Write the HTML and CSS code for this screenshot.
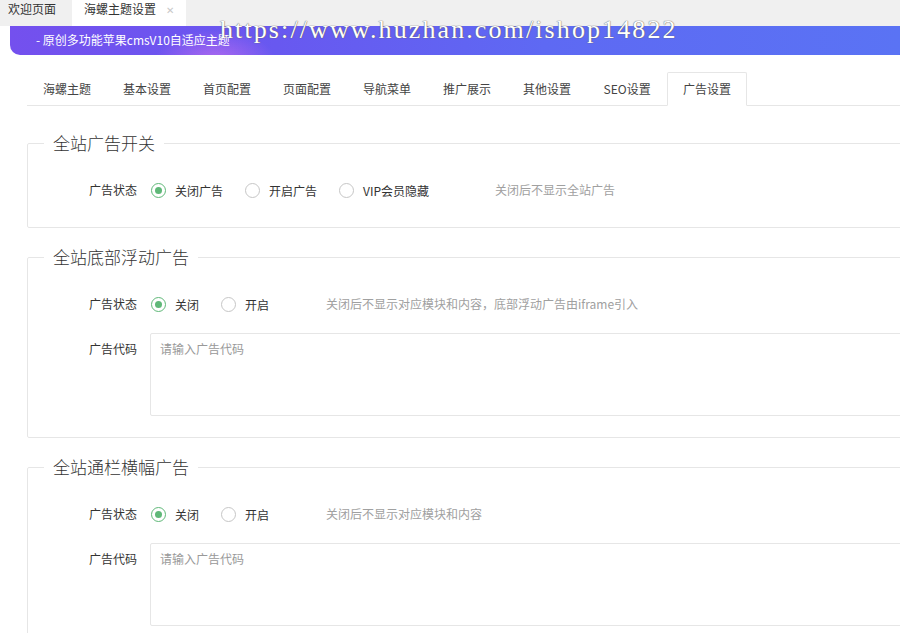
FILE: index.html
```html
<!DOCTYPE html>
<html lang="zh-CN">
<head>
  <meta charset="UTF-8">
  <meta name="viewport" content="width=device-width, initial-scale=1.0">
  <title>海螺主题设置</title>
  <link rel="stylesheet" href="styles.css">
</head>
<body>

  <!-- 顶部标签页 -->
  <div class="page-tabs">
    <div class="page-tab">欢迎页面</div>
    <div class="page-tab active">海螺主题设置<span class="tab-close">✕</span></div>
  </div>

  <div class="watermark">https://www.huzhan.com/ishop14822</div>

  <div class="banner">- 原创多功能苹果cmsV10自适应主题</div>

  <div class="main">
    <ul class="tab-title">
      <li>海螺主题</li>
      <li>基本设置</li>
      <li>首页配置</li>
      <li>页面配置</li>
      <li>导航菜单</li>
      <li>推广展示</li>
      <li>其他设置</li>
      <li>SEO设置</li>
      <li class="this">广告设置</li>
    </ul>

    <!-- 全站广告开关 -->
    <fieldset class="field">
      <legend>全站广告开关</legend>
      <div class="form-item">
        <label class="form-label">广告状态</label>
        <div class="radio checked"><i></i>关闭广告</div>
        <div class="radio"><i></i>开启广告</div>
        <div class="radio"><i></i>VIP会员隐藏</div>
        <div class="word-aux wide">关闭后不显示全站广告</div>
      </div>
    </fieldset>

    <!-- 全站底部浮动广告 -->
    <fieldset class="field">
      <legend>全站底部浮动广告</legend>
      <div class="form-item">
        <label class="form-label">广告状态</label>
        <div class="radio checked"><i></i>关闭</div>
        <div class="radio"><i></i>开启</div>
        <div class="word-aux">关闭后不显示对应模块和内容，底部浮动广告由iframe引入</div>
      </div>
      <div class="form-item">
        <label class="form-label">广告代码</label>
        <textarea class="textarea" placeholder="请输入广告代码"></textarea>
      </div>
    </fieldset>

    <!-- 全站通栏横幅广告 -->
    <fieldset class="field">
      <legend>全站通栏横幅广告</legend>
      <div class="form-item">
        <label class="form-label">广告状态</label>
        <div class="radio checked"><i></i>关闭</div>
        <div class="radio"><i></i>开启</div>
        <div class="word-aux">关闭后不显示对应模块和内容</div>
      </div>
      <div class="form-item">
        <label class="form-label">广告代码</label>
        <textarea class="textarea" placeholder="请输入广告代码"></textarea>
      </div>
    </fieldset>
  </div>

</body>
</html>
```

FILE: styles.css
```css
html, body {
  overflow: hidden;
}

body {
  margin: 0;
  padding: 0;
  background-color: #FFF;
  font-family: "Noto Sans CJK SC", "Liberation Sans", sans-serif;
  font-size: 12px;
  color: #333;
  position: relative;
}

.page-tabs {
  display: flex;
  height: 26px;
  background-color: #F0F0F0;
}

.page-tab {
  padding: 0 16px 0 8px;
  line-height: 18px;
  color: #333;
}

.page-tab.active {
  background-color: #FFF;
  padding: 0 12px;
}

.tab-close {
  margin-left: 10px;
  font-size: 10px;
  color: #C8C8C8;
}

.watermark {
  position: absolute;
  left: 220px;
  top: 15px;
  font-family: "Liberation Serif", serif;
  font-size: 26px;
  line-height: 30px;
  letter-spacing: 2.1px;
  color: #FFF;
  text-shadow: 0 0 1px #666, 0 0 1px #666;
  white-space: nowrap;
  z-index: 5;
}

.banner {
  margin-left: 10px;
  height: 29px;
  line-height: 28px;
  padding-left: 26px;
  border-radius: 0 0 0 10px;
  color: #FFF;
  background:
    radial-gradient(circle at 935px 45px, #4F6BF6 0, #4F6BF6 48px, rgba(79, 107, 246, 0) 49px),
    radial-gradient(ellipse 60px 30px at 205px 34px, rgba(226, 120, 240, 0.55), rgba(226, 120, 240, 0)),
    linear-gradient(90deg, #7450EE 0%, #6858F0 30%, #5E69F3 60%, #5A73F4 100%);
}

.main {
  width: 1000px;
  padding-left: 27px;
}

.tab-title {
  display: flex;
  list-style: none;
  margin: 17px 0 0;
  padding: 0;
  height: 33px;
  border-bottom: 1px solid #E6E6E6;
}

.tab-title li {
  box-sizing: border-box;
  min-width: 80px;
  height: 34px;
  line-height: 31px;
  padding: 0 15px;
  text-align: center;
  border: 1px solid transparent;
  color: #444;
}

.tab-title li.this {
  background-color: #FFF;
  border-color: #E6E6E6;
  border-bottom-color: #FFF;
  border-radius: 2px 2px 0 0;
}

.field {
  margin: 25px 0 0;
  padding: 19px 0 21px;
  border: 1px solid #E6E6E6;
  border-radius: 2px;
}

.field + .field {
  margin-top: 17px;
}

.field legend {
  margin-left: 16px;
  padding: 0 9px;
  font-size: 17px;
  font-weight: 300;
  line-height: 24px;
  color: #333;
}

.form-item {
  display: flex;
  align-items: flex-start;
  margin-bottom: 13px;
}

.form-item:last-child {
  margin-bottom: 0;
}

.form-label {
  width: 109px;
  padding-right: 13px;
  text-align: right;
  line-height: 32px;
  color: #333;
}

.radio {
  display: flex;
  align-items: center;
  height: 32px;
  margin-left: 1px;
  margin-right: 21px;
  color: #333;
}

.radio i {
  box-sizing: border-box;
  width: 15px;
  height: 15px;
  border: 1px solid #C6C6C6;
  border-radius: 50%;
  margin-right: 9px;
  position: relative;
}

.radio.checked i {
  border-color: #5FB878;
}

.radio.checked i::after {
  content: "";
  position: absolute;
  left: 3px;
  top: 3px;
  width: 7px;
  height: 7px;
  border-radius: 50%;
  background-color: #5FB878;
}

.word-aux {
  line-height: 32px;
  margin-left: 36px;
  color: #A0A0A0;
}

.word-aux.wide {
  margin-left: 45px;
}

.textarea {
  box-sizing: border-box;
  flex: 1;
  height: 83px;
  margin: 0 20px 0 0;
  padding: 6px 9px;
  border: 1px solid #E6E6E6;
  border-radius: 2px;
  font-family: "Noto Sans CJK SC", "Liberation Sans", sans-serif;
  font-size: 12px;
  color: #333;
  resize: none;
  outline: none;
}

.textarea::placeholder {
  color: #999;
}
```
